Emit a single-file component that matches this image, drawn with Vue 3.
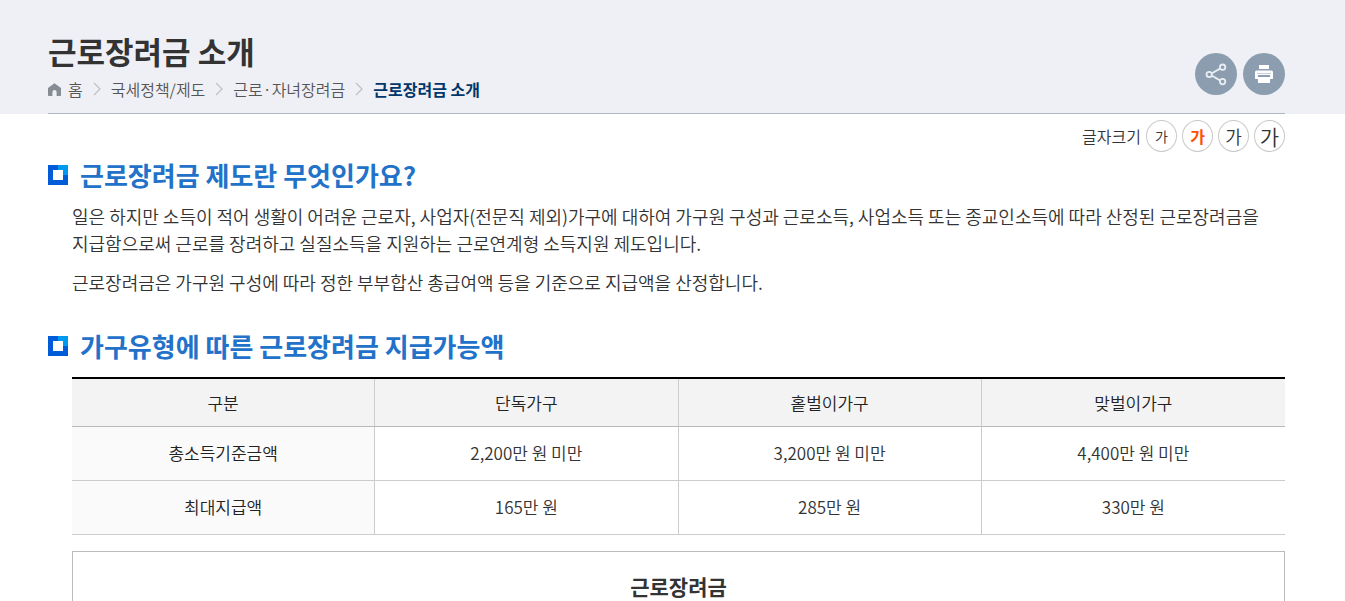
<template>
  <div class="page">
    <header class="page-head">
      <div class="head-inner">
        <div class="head-text">
          <h1 class="page-title">근로장려금 소개</h1>
          <nav class="breadcrumb" aria-label="현재 위치">
            <svg class="home-icon" viewBox="0 0 13 13" aria-hidden="true">
              <path d="M6.5 0.3 13 5v7.2a.8.8 0 0 1-.8.8H8.6V9.2a2.1 2.1 0 0 0-4.2 0V13H.8a.8.8 0 0 1-.8-.8V5z" />
            </svg>
            <template v-for="(item, i) in crumbs" :key="item">
              <svg v-if="i > 0" class="arrow" viewBox="0 0 8 14" aria-hidden="true">
                <path d="M1 1l6 6-6 6" />
              </svg>
              <a href="#" :class="{ current: i === crumbs.length - 1 }">{{ item }}</a>
            </template>
          </nav>
        </div>

        <div class="head-tools">
          <button type="button" class="round-btn" aria-label="공유하기">
            <svg viewBox="0 0 42 42" aria-hidden="true">
              <g fill="none" stroke="#e8edf2" stroke-width="1.8">
                <path d="M17 20.2l8-4.6M17 22.8l8 4.6" />
                <circle cx="14.2" cy="21.5" r="2.7" />
                <circle cx="27.6" cy="14.2" r="2.7" />
                <circle cx="27.6" cy="28.6" r="2.7" />
              </g>
            </svg>
          </button>
          <button type="button" class="round-btn" aria-label="인쇄하기">
            <svg viewBox="0 0 42 42" aria-hidden="true">
              <path d="M16 12h10v4H16z" fill="#fff" />
              <path d="M13.5 17.5h15a1.5 1.5 0 0 1 1.5 1.5V26h-3v-4H15v4h-3v-7a1.5 1.5 0 0 1 1.5-1.5z" fill="#fff" />
              <path d="M14 20.5h14" stroke="#c3ced8" stroke-width="1" />
              <path d="M15 24h12v6H15z" fill="#fff" />
            </svg>
          </button>
        </div>
      </div>
    </header>

    <main class="content">
      <div class="font-size">
        <span class="font-label">글자크기</span>
        <button
          v-for="size in sizes"
          :key="size"
          type="button"
          class="size-btn"
          :class="[size, { active: selected === size }]"
          :aria-pressed="selected === size"
          @click="selected = size"
        >가</button>
      </div>

      <section class="section">
        <h2 class="section-title">
          <span class="bullet"></span>근로장려금 제도란 무엇인가요?
        </h2>
        <p>일은 하지만 소득이 적어 생활이 어려운 근로자, 사업자(전문직 제외)가구에 대하여 가구원 구성과 근로소득, 사업소득 또는 종교인소득에 따라 산정된 근로장려금을 지급함으로써 근로를 장려하고 실질소득을 지원하는 근로연계형 소득지원 제도입니다.</p>
        <p>근로장려금은 가구원 구성에 따라 정한 부부합산 총급여액 등을 기준으로 지급액을 산정합니다.</p>
      </section>

      <section class="section">
        <h2 class="section-title">
          <span class="bullet"></span>가구유형에 따른 근로장려금 지급가능액
        </h2>
        <table class="amount-table">
          <thead>
            <tr>
              <th v-for="col in columns" :key="col" scope="col">{{ col }}</th>
            </tr>
          </thead>
          <tbody>
            <tr v-for="row in rows" :key="row.name">
              <th scope="row">{{ row.name }}</th>
              <td v-for="value in row.values" :key="value">{{ value }}</td>
            </tr>
          </tbody>
        </table>
        <div class="chart-box">
          <h3 class="chart-title">근로장려금</h3>
        </div>
      </section>
    </main>
  </div>
</template>

<script setup>
import { ref } from 'vue'

const crumbs = ['홈', '국세정책/제도', '근로·자녀장려금', '근로장려금 소개']

// 글자크기
const sizes = ['small', 'normal', 'large', 'xlarge']
const selected = ref('normal')

const columns = ['구분', '단독가구', '홑벌이가구', '맞벌이가구']
const rows = [
  { name: '총소득기준금액', values: ['2,200만 원 미만', '3,200만 원 미만', '4,400만 원 미만'] },
  { name: '최대지급액', values: ['165만 원', '285만 원', '330만 원'] },
]
</script>

<style>
body {
  margin: 0;
  background: #fff;
}
</style>

<style scoped>
.page {
  color: #333;
  font-family: "Noto Sans CJK KR", sans-serif;
  font-size: 17px;
  font-weight: 350;
  line-height: 27px;
  word-break: keep-all;
}

button {
  padding: 0;
  font-family: inherit;
  cursor: pointer;
}

/* 상단 제목 영역 */
.page-head {
  padding: 29px 60px 0 48px;
  background: #eff0f5;
}

.head-inner {
  display: flex;
  justify-content: space-between;
  align-items: flex-end;
  padding-bottom: 10px;
  border-bottom: 1px solid #b0b8c2;
}

.page-title {
  margin: 0 0 2px;
  font-size: 31px;
  font-weight: 700;
  line-height: 44px;
}

.breadcrumb {
  display: flex;
  align-items: center;
  font-size: 16px;
  line-height: 28px;
}

.breadcrumb a {
  color: #555;
  text-decoration: none;
}

.breadcrumb .current {
  color: #003669;
  font-weight: 700;
}

.home-icon {
  width: 13px;
  height: 13px;
  margin-right: 7px;
  fill: #878c94;
}

.arrow {
  width: 8px;
  height: 14px;
  margin: 0 10px;
  fill: none;
  stroke: #bfc2c6;
  stroke-width: 1.3;
}

.head-tools {
  display: flex;
  gap: 6px;
  margin-bottom: 8px;
}

.round-btn {
  width: 42px;
  height: 42px;
  border: 0;
  border-radius: 50%;
  background: #8b9daf;
}

.round-btn svg {
  display: block;
}

/* 본문 */
.content {
  padding: 6px 60px 0 48px;
}

.font-size {
  display: flex;
  justify-content: flex-end;
  align-items: center;
  gap: 5px;
}

.font-label {
  font-size: 16px;
}

.size-btn {
  box-sizing: border-box;
  width: 31px;
  height: 32px;
  border: 1px solid #c8c8c8;
  border-radius: 50%;
  background: #fff;
  color: #333;
  font-weight: 350;
  line-height: 28px;
}

.small {
  font-size: 14px;
}

.normal {
  font-size: 16px;
}

.large {
  font-size: 18px;
}

.xlarge {
  font-size: 21px;
}

.size-btn.active {
  color: #ff5000;
  font-weight: 700;
}

.section {
  padding-left: 24px;
  margin-bottom: 30px;
}

.section-title {
  display: flex;
  align-items: center;
  gap: 12px;
  margin: 3px 0 8px -24px;
  color: #2272c9;
  font-size: 26px;
  font-weight: 700;
  line-height: 40px;
}

.bullet {
  box-sizing: border-box;
  width: 20px;
  height: 20px;
  padding: 5px;
  background:
    linear-gradient(#fff, #fff) content-box no-repeat,
    linear-gradient(#0099f0, #0099f0) right top / 10px 10px border-box no-repeat,
    #005bd8;
  background-origin: content-box, border-box, border-box;
}

p {
  margin: 0 0 12px;
  font-size: 18px;
}

.amount-table {
  width: 100%;
  margin-top: 11px;
  border-top: 2px solid #000;
  border-collapse: separate;
  border-spacing: 0;
  table-layout: fixed;
  text-align: center;
}

.amount-table th,
.amount-table td {
  padding: 12px 10px 14px;
  border-right: 1px solid #ccc;
  border-bottom: 1px solid #ccc;
  font-weight: 350;
}

.amount-table th:last-child,
.amount-table td:last-child {
  border-right: 0;
}

.amount-table th {
  color: #222;
}

.amount-table thead th {
  padding: 10px;
  border-bottom-color: #b8b8b8;
  background: #f3f3f3;
}

.amount-table tbody th {
  background: #fafafa;
}

.chart-box {
  margin-top: 16px;
  padding: 18px;
  border: 1px solid #bbb;
}

.chart-title {
  margin: 0;
  font-size: 21px;
  font-weight: 700;
  line-height: 32px;
  text-align: center;
}
</style>
